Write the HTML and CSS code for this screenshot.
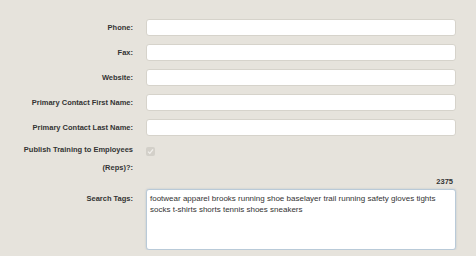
FILE: index.html
```html
<!DOCTYPE html>
<html lang="en">
<head>
    <meta charset="UTF-8">
    <meta name="viewport" content="width=device-width, initial-scale=1.0">
    <title>Account Details</title>
    <link rel="stylesheet" href="styles.css">
</head>
<body>
    <form class="details-form">
        <div class="form-row">
            <label class="form-label" for="phone">Phone:</label>
            <input class="form-input" id="phone" type="text">
        </div>
        <div class="form-row">
            <label class="form-label" for="fax">Fax:</label>
            <input class="form-input" id="fax" type="text">
        </div>
        <div class="form-row">
            <label class="form-label" for="website">Website:</label>
            <input class="form-input" id="website" type="text">
        </div>
        <div class="form-row">
            <label class="form-label" for="first-name">Primary Contact First Name:</label>
            <input class="form-input" id="first-name" type="text">
        </div>
        <div class="form-row">
            <label class="form-label" for="last-name">Primary Contact Last Name:</label>
            <input class="form-input" id="last-name" type="text">
        </div>
        <div class="form-row form-row-publish">
            <label class="form-label form-label-wrap">Publish Training to Employees (Reps)?:</label>
            <span class="form-check" role="checkbox" aria-checked="true" aria-disabled="true">
                <svg width="9" height="9" viewBox="0 0 9 9">
                    <path d="M2 4.6 L3.8 6.4 L7 2.4" fill="none" stroke="#f2f0ec" stroke-width="1.3"/>
                </svg>
            </span>
        </div>
        <div class="form-row form-row-tags">
            <span class="char-count">2375</span>
            <label class="form-label" for="tags">Search Tags:</label>
            <textarea class="form-textarea" id="tags">footwear apparel brooks running shoe baselayer trail running safety gloves tights socks t-shirts shorts tennis shoes sneakers</textarea>
        </div>
    </form>
</body>
</html>
```

FILE: styles.css
```css
body {
    margin: 0;
    background-color: #e6e3dc;
    font-family: "Liberation Sans", Arial, sans-serif;
    color: #333;
}

.details-form {
    display: flex;
    flex-direction: column;
    gap: 8px;
    padding-top: 19px;
}

.form-row {
    display: grid;
    grid-template-columns: 133px 310px;
    column-gap: 13px;
    align-items: center;
}

.form-label {
    text-align: right;
    font-size: 7.5px;
    font-weight: bold;
    color: #333;
}

.form-input {
    box-sizing: border-box;
    height: 17px;
    margin: 0;
    border: 1px solid #d6d3cb;
    border-radius: 3px;
    background-color: #fff;
}

.form-row-publish {
    align-items: start;
    margin-top: -3px;
}

.form-label-wrap {
    line-height: 18px;
    padding-left: 20px;
}

.form-check {
    display: block;
    width: 9px;
    height: 9px;
    margin-top: 6px;
    border-radius: 2px;
    background-color: #d3d0c9;
}

.form-check svg {
    display: block;
}

.form-row-tags {
    align-items: start;
    margin-top: -8px;
}

.char-count {
    grid-column: 2;
    text-align: right;
    padding-right: 3px;
    font-size: 7.5px;
    font-weight: bold;
    line-height: 10px;
    margin-bottom: 2px;
}

.form-row-tags .form-label {
    grid-column: 1;
    grid-row: 2;
    padding-top: 5px;
}

.form-textarea {
    grid-column: 2;
    grid-row: 2;
    box-sizing: border-box;
    height: 61px;
    margin: 0;
    padding: 3px 3px;
    border: 1px solid #b9cad8;
    border-radius: 3px;
    box-shadow: 0 0 2px rgba(120, 150, 180, 0.4);
    background-color: #fff;
    resize: none;
    font-family: "Liberation Sans", Arial, sans-serif;
    font-size: 8px;
    line-height: 11px;
    color: #333;
}
```
